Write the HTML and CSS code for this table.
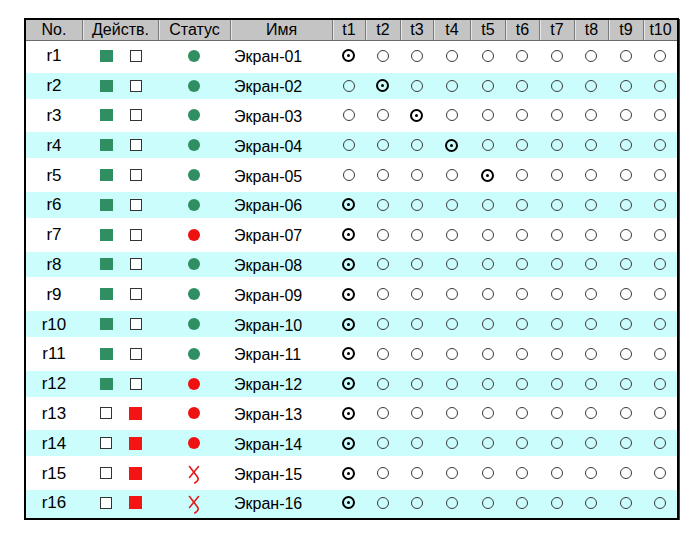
FILE: index.html
```html
<!DOCTYPE html>
<html lang="ru">
<head>
<meta charset="utf-8">
<title>Экраны</title>
<link rel="stylesheet" href="styles.css">
</head>
<body>
<div class="grid-table">
  <div class="row head">
    <div class="hc">No.</div><div class="hc">Действ.</div><div class="hc">Статус</div><div class="hc">Имя</div>
    <div class="hc">t1</div><div class="hc">t2</div><div class="hc">t3</div><div class="hc">t4</div><div class="hc">t5</div>
    <div class="hc">t6</div><div class="hc">t7</div><div class="hc">t8</div><div class="hc">t9</div><div class="hc">t10</div>
  </div>
  <div id="body"></div>
</div>
<script src="app.js"></script>
</body>
</html>
```
FILE: styles.css
```css
html, body { margin: 0; padding: 0; background: #fff; }
body { font-family: "Liberation Sans", Arial, sans-serif; color: #000; }

.grid-table {
  margin: 18px 0 0 24px;
  width: 651px;
  border: 2px solid #000;
  box-shadow: 1px 1px 0 #444;
}

.row {
  display: grid;
  grid-template-columns: 56px 76px 72px 102px 33px 35px 33px 37px 35px 34px 35px 34px 35px 34px;
  height: 29.8px;
  align-items: center;
}

.row.head {
  height: 20px;
  background: #c4c4c4;
  border-bottom: 1px solid #6a6a6a;
}

.hc {
  height: 100%;
  display: flex;
  align-items: center;
  justify-content: center;
  font-size: 16px;
  border-left: 1px solid #7a7a7a;
  box-shadow: inset 1px 0 0 #e6e6e6;
  line-height: 1;
}
.hc:first-child { border-left: none; box-shadow: none; }

.row.alt {
  background: linear-gradient(#fff 0 2px, #ccfdfd 2px calc(100% - 2px), #fff calc(100% - 2px));
}
.row.last.alt { background: linear-gradient(#fff 0 2px, #ccfdfd 2px); }

.c {
  display: flex;
  align-items: center;
  justify-content: center;
  font-size: 16px;
}
.c.num { padding-top: 1px; font-size: 17px; }
.c.name { justify-content: flex-start; padding-left: 4px; font-size: 16px; padding-top: 3px; }

.acts { gap: 17px; padding-left: 1px; }

.sq { width: 12px; height: 12px; box-sizing: border-box; }
.sq.g { background: #2f8f62; width: 13px; }
.sq.r { background: #f41414; width: 13px; height: 13px; }
.sq.e { border: 1px solid #333; background: #fff; }

.dot { width: 12px; height: 12px; border-radius: 50%; }
.dot.g { background: #2f8f62; }
.dot.r { background: #ee1111; }

.xmark { display: block; width: 12px; height: 20px; margin-top: 4px; }

.rad {
  width: 12px; height: 12px; box-sizing: border-box;
  border: 1px solid #3a3a3a; border-radius: 50%;
  position: relative;
}
.rad.on {
  width: 13px; height: 13px;
  border: 2px solid #000;
}
.rad.on::after {
  content: "";
  position: absolute;
  left: 3px; top: 3px;
  width: 3px; height: 3px;
  border-radius: 50%;
  background: #000;
}
```
FILE: app.js
```js
(function () {
  var body = document.getElementById('body');
  var status = ['g','g','g','g','g','g','r','g','g','g','g','r','r','r','x','x'];
  var sel = [1,2,3,4,5,1,1,1,1,1,1,1,1,1,1,1];
  var html = '';
  for (var i = 1; i <= 16; i++) {
    var cls = 'row' + (i % 2 === 0 ? ' alt' : '') + (i === 16 ? ' last' : '');
    var acts = i <= 12
      ? '<span class="sq g"></span><span class="sq e"></span>'
      : '<span class="sq e"></span><span class="sq r"></span>';
    var s = status[i - 1];
    var st = s === 'x'
      ? '<svg class="xmark" viewBox="0 0 12 20"><path d="M1.5 1.5 L9.5 12 Q11.2 14.6 8.6 16.6 L6.8 18" fill="none" stroke="#e31b1b" stroke-width="1.6" stroke-linecap="round"/><path d="M10.5 1.5 L1.5 12.5" fill="none" stroke="#e31b1b" stroke-width="1.6" stroke-linecap="round"/></svg>'
      : '<span class="dot ' + s + '"></span>';
    var nm = 'Экран-' + (i < 10 ? '0' + i : i);
    var r = '<div class="' + cls + '">' +
      '<div class="c num">r' + i + '</div>' +
      '<div class="c acts">' + acts + '</div>' +
      '<div class="c">' + st + '</div>' +
      '<div class="c name">' + nm + '</div>';
    for (var t = 1; t <= 10; t++) {
      r += '<div class="c"><span class="rad' + (t === sel[i - 1] ? ' on' : '') + '"></span></div>';
    }
    r += '</div>';
    html += r;
  }
  body.innerHTML = html;
})();
```
